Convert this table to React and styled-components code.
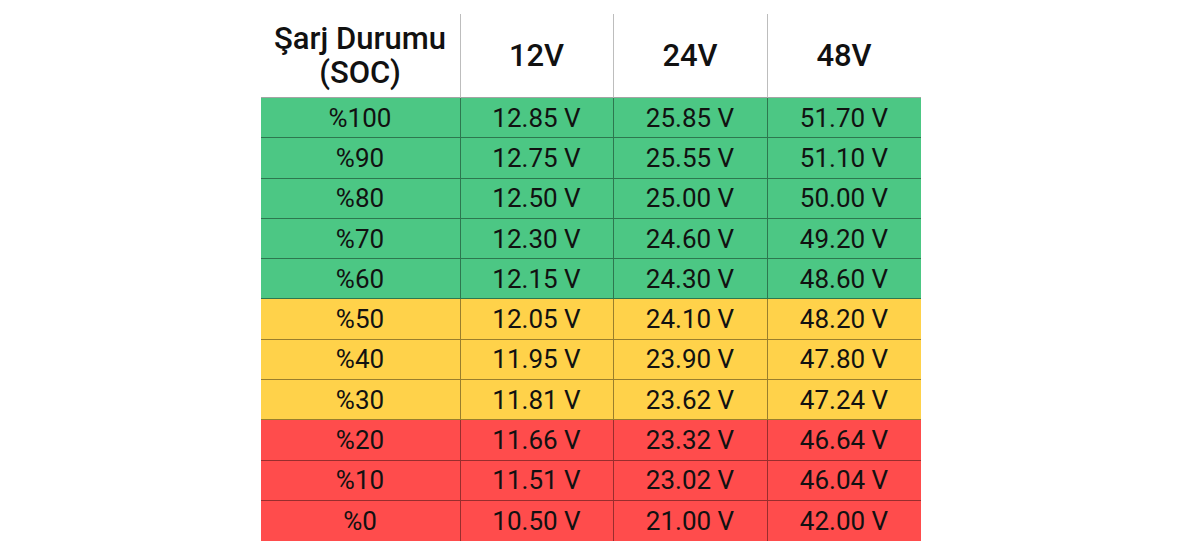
import React from "react";
import styled, { createGlobalStyle } from "styled-components";

const rows = [
  ["%100", "12.85 V", "25.85 V", "51.70 V", "green"],
  ["%90", "12.75 V", "25.55 V", "51.10 V", "green"],
  ["%80", "12.50 V", "25.00 V", "50.00 V", "green"],
  ["%70", "12.30 V", "24.60 V", "49.20 V", "green"],
  ["%60", "12.15 V", "24.30 V", "48.60 V", "green"],
  ["%50", "12.05 V", "24.10 V", "48.20 V", "yellow"],
  ["%40", "11.95 V", "23.90 V", "47.80 V", "yellow"],
  ["%30", "11.81 V", "23.62 V", "47.24 V", "yellow"],
  ["%20", "11.66 V", "23.32 V", "46.64 V", "red"],
  ["%10", "11.51 V", "23.02 V", "46.04 V", "red"],
  ["%0", "10.50 V", "21.00 V", "42.00 V", "red"],
];

const COLORS = {
  green: "#4cc784",
  yellow: "#ffd24a",
  red: "#ff4c4c",
};

const GlobalStyle = createGlobalStyle`
  html, body {
    margin: 0;
    background: #fff;
    font-family: Roboto, "Liberation Sans", sans-serif;
  }
`;

const Page = styled.div`
  display: flex;
  justify-content: center;
  padding-top: 14px;
`;

const Table = styled.div`
  display: grid;
  grid-template-columns: 199px 153px 154px 154px;
  grid-template-rows: 84px;
  grid-auto-rows: 40.3px;
`;

const HeadCell = styled.div`
  display: flex;
  align-items: center;
  justify-content: center;
  text-align: center;
  font-size: 31px;
  font-weight: 500;
  line-height: 34px;
  color: #111;
  border-left: ${(p) => (p.$first ? "none" : "1px solid #bdbdbd")};
  border-bottom: 1px solid #a4a4a4;
`;

const Cell = styled.div`
  display: flex;
  align-items: center;
  justify-content: center;
  font-size: 26px;
  color: #111;
  background: ${(p) => COLORS[p.$tone]};
  border-left: ${(p) => (p.$first ? "none" : "1px solid rgba(0, 0, 0, 0.4)")};
  border-bottom: ${(p) => (p.$last ? "none" : "1px solid rgba(0, 0, 0, 0.4)")};
`;

export default function App() {
  return (
    <>
      <GlobalStyle />
      <Page>
        <Table>
          <HeadCell $first>
            Şarj Durumu
            <br />
            (SOC)
          </HeadCell>
          <HeadCell>12V</HeadCell>
          <HeadCell>24V</HeadCell>
          <HeadCell>48V</HeadCell>
          {rows.map(([soc, a, b, c, tone], i) => {
            const last = i === rows.length - 1;
            return (
              <React.Fragment key={soc}>
                <Cell $first $tone={tone} $last={last}>{soc}</Cell>
                <Cell $tone={tone} $last={last}>{a}</Cell>
                <Cell $tone={tone} $last={last}>{b}</Cell>
                <Cell $tone={tone} $last={last}>{c}</Cell>
              </React.Fragment>
            );
          })}
        </Table>
      </Page>
    </>
  );
}
